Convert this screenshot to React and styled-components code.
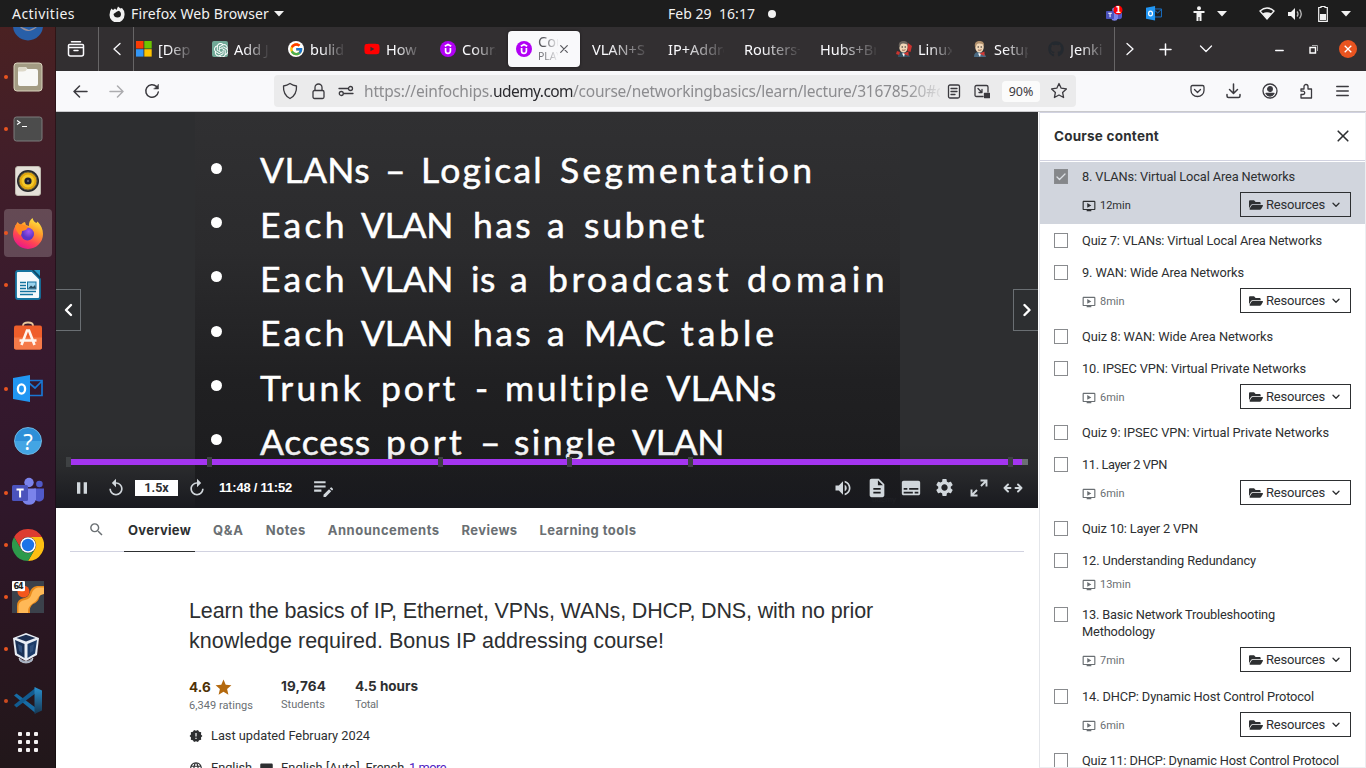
import React, { useLayoutEffect, useRef, useState } from 'react';
import styled, { createGlobalStyle, css } from 'styled-components';
import {
  MdReplay, MdSearch, MdSettings, MdVolumeUp, MdStar, MdOndemandVideo, MdEditNote,
  MdNewReleases, MdLanguage, MdDescription, MdSubtitles, MdPause,
} from 'react-icons/md';
import { FaFolderOpen, FaGithub, FaYoutube } from 'react-icons/fa';
import { FcGoogle } from 'react-icons/fc';
import { SiOpenai } from 'react-icons/si';

const GlobalStyle = createGlobalStyle`
  * { box-sizing: border-box; }
  html, body { margin: 0; height: 768px; overflow: hidden; }
  body { background: #fff; font-family: Roboto, "Liberation Sans", sans-serif; color: #2d2f31; }
  svg { display: block; flex: none; }
`;

const FitSpan = styled.span`
  display: inline-block;
  white-space: pre;
`;

/* Tracks a run of text out so that it fills the given width. */
function Fit({ width, children }) {
  const ref = useRef(null);
  const [spacing, setSpacing] = useState(0);
  useLayoutEffect(() => {
    const el = ref.current;
    el.style.letterSpacing = '0px';
    const natural = el.getBoundingClientRect().width;
    const next = (width - natural) / String(children).length;
    el.style.letterSpacing = `${next}px`;
    setSpacing(next);
  }, [width, children]);
  return <FitSpan ref={ref} style={{ letterSpacing: spacing }}>{children}</FitSpan>;
}

/* ---------- desktop shell ---------- */

const Desktop = styled.div`
  width: 1366px;
  height: 768px;
  display: grid;
  grid-template-rows: 27px 741px;
  overflow: hidden;
`;

const SystemBar = styled.header`
  background: #1d1d1d;
  color: #f2f2f2;
  display: grid;
  grid-template-columns: 500px 1fr 500px;
  align-items: center;
  font: 14px/27px "Noto Sans", sans-serif;
`;

const BarGroup = styled.div`
  display: flex;
  align-items: center;
  height: 27px;
  padding-left: ${(p) => p.$left || 0}px;
`;

const Space = styled.span`
  flex: none;
  width: ${(p) => p.$w}px;
`;

const NotifyDot = styled.span`
  width: 8px;
  height: 8px;
  border-radius: 50%;
  background: #f2f2f2;
`;

const Work = styled.div`
  display: grid;
  grid-template-columns: 56px 1310px;
  min-height: 0;
`;

const Dock = styled.nav`
  background: linear-gradient(#4a2122 0, #411e29 18%, #36192e 45%, #2f172a 65%, #28161f 85%, #21171a 100%);
  border-right: 1px solid rgba(0, 0, 0, 0.35);
  overflow: hidden;
  height: 741px;
`;

const DockList = styled.div`
  margin-top: -28px;
  display: flex;
  flex-direction: column;
`;

const DockItem = styled.div`
  height: 52px;
  display: grid;
  grid-template-columns: 4px 48px;
  align-items: center;
`;

const DockTile = styled.div`
  position: relative;
  width: 48px;
  height: 48px;
  display: grid;
  place-items: center;
  border-radius: 4px;
  background: ${(p) => (p.$active ? 'rgba(255,255,255,0.2)' : 'transparent')};
  opacity: ${(p) => (p.$dim ? 0.85 : 1)};
`;

const RunningDot = styled.i`
  position: absolute;
  left: 0;
  top: 22px;
  width: 4px;
  height: 4px;
  border-radius: 50%;
  background: #e95420;
`;

const AppGrid = styled.div`
  display: grid;
  grid-template-columns: repeat(3, 4px);
  gap: 4px;
  margin: 5px 0 0 18px;
  i { width: 4px; height: 4px; border-radius: 1px; background: #f4f1f2; }
`;

/* ---------- browser ---------- */

const Browser = styled.main`
  display: grid;
  grid-template-rows: 44px 41px 656px;
  min-width: 0;
`;

const TabStrip = styled.div`
  background: #322f31;
  color: #fbfbfe;
  display: flex;
  height: 44px;
`;

const StripCell = styled.div`
  width: ${(p) => p.$w}px;
  height: 44px;
  display: grid;
  place-items: center;
  padding: 0 ${(p) => p.$padRight || 0}px 0 ${(p) => p.$padLeft || 0}px;
  border-right: ${(p) => (p.$rule ? '1px solid #676566' : 'none')};
`;

const TabScroller = styled.div`
  width: 980px;
  overflow: hidden;
`;

const TabTrack = styled.div`
  display: flex;
  margin-left: -8px;
`;

const Tab = styled.div`
  flex: none;
  width: 72px;
  height: 36px;
  margin: 4px 2px;
  padding-left: 8px;
  border-radius: 4px;
  display: flex;
  align-items: center;
  gap: 6px;
  font: 14.5px/18px "Noto Sans", sans-serif;
  ${(p) => p.$active && css`
    background: #f9f9fb;
    color: #5a5a5f;
    box-shadow: 0 0 3px rgba(0, 0, 0, 0.5);
  `}
`;

const TabIcon = styled.span`
  flex: none;
  width: 16px;
  height: 16px;
`;

const TabLabel = styled.div`
  width: ${(p) => p.$w}px;
  overflow: hidden;
  white-space: nowrap;
  mask-image: linear-gradient(to right, #000 30%, transparent 105%);
  small { display: block; font-size: 10.5px; line-height: 12px; color: #77777c; }
`;

const ActiveLabel = styled(TabLabel)`
  flex: none;
  margin-right: -4px;
  line-height: 14px;
  height: 30px;
  small { line-height: 15px; padding-top: 1px; }
`;

const Toolbar = styled.div`
  background: #f9f9fb;
  border-bottom: 1px solid #c9c9cc;
  height: 41px;
  display: flex;
  align-items: center;
  color: #3b3a3f;
`;

const ToolIcon = styled.span`
  flex: none;
  width: ${(p) => p.$w || 36}px;
  display: grid;
  place-items: center;
  opacity: ${(p) => (p.$off ? 0.4 : 1)};
`;

const AddressBar = styled.div`
  flex: none;
  width: 802px;
  height: 32px;
  margin-left: 104px;
  border-radius: 4px;
  background: #ebebec;
  display: flex;
  align-items: center;
  padding-left: 2px;
`;

const Url = styled.div`
  flex: none;
  width: 576px;
  margin-left: 4px;
  overflow: hidden;
  white-space: nowrap;
  color: #8c8c8f;
  font: 15.5px/24px "Noto Sans", sans-serif;
  mask-image: linear-gradient(to right, #000 94%, transparent 101%);
  b { font-weight: 400; color: #2a2a2e; }
`;

const ZoomBadge = styled.div`
  flex: none;
  width: 38px;
  height: 21px;
  margin: 0 2px 0 6px;
  border-radius: 4px;
  background: #fbfbfb;
  text-align: center;
  font: 12.5px/21px "Noto Sans", sans-serif;
`;

const Page = styled.div`
  display: grid;
  grid-template-columns: 982px 328px;
  height: 656px;
  overflow: hidden;
  background: #fff;
`;

/* ---------- video player ---------- */

const Player = styled.section`
  position: relative;
  height: 396px;
  background: #2d2e30;
  overflow: hidden;
`;

const Slide = styled.div`
  width: 705px;
  height: 396px;
  margin-left: 139px;
  padding-top: 31px;
  background: linear-gradient(#303032 0%, #2b2b2d 35%, #202022 68%, #1b1b1d 100%);
`;

const Bullet = styled.div`
  height: 54.35px;
  display: flex;
  align-items: center;
  padding-left: 16px;
  color: #fff;
  font: 35.5px/54px Lato, sans-serif;
  -webkit-text-stroke: 0.5px #fff;
  &::before {
    content: '';
    width: 11px;
    height: 11px;
    margin: 0 38px 4px 0;
    border-radius: 50%;
    background: #fff;
  }
`;

const NavArrow = styled.button`
  position: absolute;
  top: 177px;
  ${(p) => (p.$side === 'left' ? 'left: -1px;' : 'right: -1px;')}
  width: 26px;
  height: 42px;
  padding: 0;
  display: grid;
  place-items: center;
  background: #2d2f31;
  border: 1px solid #6a6f73;
`;

const PlayerOverlay = styled.div`
  position: absolute;
  left: 0;
  right: 0;
  bottom: 0;
  height: 80px;
  padding: 29px 10px 0 13px;
  background: linear-gradient(rgba(28, 29, 31, 0) 20%, rgba(26, 27, 31, 0.2) 50%, rgba(24, 25, 30, 0.95) 100%);
`;

const Track = styled.div`
  position: relative;
  height: 10px;
  padding: 2px 0;
  &::before {
    content: '';
    display: block;
    height: 6px;
    background: linear-gradient(to right, #a435f0 953px, #6a6f73 953px);
  }
`;

const Marker = styled.i`
  position: absolute;
  top: 0;
  width: 5px;
  height: 10px;
  background: #3e4143;
`;

const Controls = styled.div`
  display: flex;
  align-items: center;
  height: 41px;
  margin-left: -13px;
  color: #d1d7dc;
`;

const Rate = styled.span`
  width: 43px;
  height: 16px;
  background: #fff;
  color: #2d2f31;
  text-align: center;
  font: 700 12.5px/16px Roboto, sans-serif;
`;

const Time = styled.span`
  color: #fff;
  font: 700 13px/16px "Liberation Sans", sans-serif;
`;

const Watermark = styled.span`
  position: absolute;
  left: 816px;
  bottom: 2px;
  color: #3c3d40;
  font: 8px/12px "Liberation Sans", sans-serif;
`;

/* ---------- course details ---------- */

const DetailTabs = styled.div`
  height: 44px;
  margin: 0 14px;
  padding-left: 18px;
  border-bottom: 1px solid #d1d2e0;
  display: flex;
  align-items: flex-start;
  color: #6a6f73;
`;

const DetailTab = styled.div`
  height: 44px;
  padding: 0 4px;
  margin-right: 13.9px;
  font: 700 13px/44px Inter, sans-serif;
  ${(p) => p.$active && css`
    color: #2d2f31;
    border-bottom: 1px solid #2d2f31;
  `}
`;

const SearchTab = styled.div`
  width: 36px;
  height: 43px;
  display: flex;
  align-items: center;
`;

const Details = styled.div`
  padding: 44px 0 0 133px;
`;

const Headline = styled.h1`
  margin: 0;
  font: 400 21.5px/30px "Liberation Sans", sans-serif;
  > span { display: block; height: 30px; }
`;

const Stats = styled.div`
  display: flex;
  margin-top: 21px;
`;

const Stat = styled.div`
  width: ${(p) => p.$w}px;
  padding-top: ${(p) => p.$drop || 0}px;
  color: #6a6f73;
  font: 11px/17px Roboto, sans-serif;
`;

const StatValue = styled.div`
  display: flex;
  align-items: center;
  gap: 3px;
  height: 19px;
  color: ${(p) => p.$color || '#2d2f31'};
  font: 700 13.5px/19px Inter, sans-serif;
`;

const InfoLine = styled.div`
  display: flex;
  align-items: center;
  height: 20px;
  margin-top: ${(p) => p.$top}px;
  font: 12.8px/20px Roboto, sans-serif;
  a { color: #5022c3; }
`;

/* ---------- course content sidebar ---------- */

const Sidebar = styled.aside`
  margin-left: 1px;
  border-left: 1px solid #e4e6ea;
  border-right: 1px solid #eceef1;
  border-bottom: 1px solid #eceef1;
  height: 656px;
  overflow: hidden;
`;

const SidebarHead = styled.div`
  position: relative;
  height: 49px;
  border-top: 1px solid #d1d2e0;
  border-bottom: 1px solid #d1d2e0;
  box-shadow: 0 1px #fff;
  background: #fff;
  padding: 0 16px 1px 14px;
  display: flex;
  align-items: center;
  justify-content: space-between;
  font: 700 13.5px/20px Inter, sans-serif;
`;

const Lectures = styled.div`
  margin-top: -1px;
`;

const Lecture = styled.div`
  display: grid;
  grid-template-columns: 14px 1fr;
  column-gap: 14px;
  height: ${(p) => p.$h}px;
  padding: 8px 14px 0 14px;
  background: ${(p) => (p.$current ? '#d1d5dd' : '#fff')};
`;

const Check = styled.span`
  width: 14px;
  height: 15px;
  margin-top: 1px;
  display: grid;
  place-items: center;
  border: 1px solid #898b8e;
  background: ${(p) => (p.$on ? '#85878a' : '#fff')};
`;

const LectureTitle = styled.div`
  font: 12.8px/17px Roboto, sans-serif;
  > span { display: block; height: 17px; }
`;

const Meta = styled.div`
  display: flex;
  justify-content: space-between;
  align-items: center;
  height: 25px;
  margin-top: ${(p) => (p.$tight ? 2 : 7)}px;
`;

const Duration = styled.span`
  display: flex;
  align-items: center;
  gap: 4px;
  padding-top: 2px;
  color: ${(p) => (p.$current ? '#2d2f31' : '#6a6f73')};
  font: 11px/16px Roboto, sans-serif;
`;

const ResourceButton = styled.button`
  width: 111px;
  height: 25px;
  padding: 0 0 0 8px;
  display: flex;
  align-items: center;
  background: transparent;
  border: 1px solid #2d2f31;
  color: #2d2f31;
  font: 13px/20px Roboto, sans-serif;
`;

/* ---------- drawings ---------- */

const Line = ({ w = 16, h = w, box = `0 0 ${w} ${h}`, sw = 1.3, children, color = 'currentColor' }) => (
  <svg width={w} height={h} viewBox={box} fill="none" stroke={color} strokeWidth={sw} strokeLinecap="round" strokeLinejoin="round">
    {children}
  </svg>
);

const Caret = () => <svg width="10" height="6"><path d="M0 0h10L5 5.5z" fill="#f2f2f2" /></svg>;

const UdemyIcon = () => (
  <svg width="16" height="16">
    <circle cx="8" cy="8" r="8" fill="#b200f5" />
    <path d="M4.8 5.2 8 3.4l3.2 1.8M5.6 7v3c0 3.2 4.8 3.2 4.8 0V7" fill="none" stroke="#fff" strokeWidth="1.7" />
  </svg>
);

const MicrosoftIcon = () => (
  <svg width="16" height="16">
    <path d="M0 0h7.5v7.5H0z" fill="#fa3c05" /><path d="M8.3 0h7.4v7.5H8.3z" fill="#6cc400" />
    <path d="M0 8.2h7.5v7.4H0z" fill="#3496f5" /><path d="M8.3 8.2h7.4v7.4H8.3z" fill="#ffc400" />
  </svg>
);

const ChatIcon = () => (
  <svg width="16" height="16">
    <rect width="16" height="16" rx="2" fill="#6fa896" />
    <SiOpenai x="2" y="2" width="12" height="12" color="#fff" />
  </svg>
);

const GoogleIcon = () => (
  <svg width="16" height="16"><circle cx="8" cy="8" r="8" fill="#fff" /><FcGoogle x="1" y="1" width="14" height="14" /></svg>
);

const JenkinsIcon = ({ tie }) => (
  <svg width="16" height="16">
    <path d="M2 16c0-4 2-5 5-5s6 1 7 5z" fill={tie ? '#335061' : '#4a6a83'} />
    <ellipse cx="7.5" cy="6" rx="4.3" ry="5.6" fill="#f0d6b7" />
    <path d="M3.3 7C1.5 1 5 0 7.500 0s5 1 4.600 5C10.500 2 6 2 4.700 3.600z" fill={tie ? '#6b645c' : '#b0906c'} />
    <path d="M6 12.500l2 3.500 1-4z" fill="#fff" />
    <path d="M7.500 12.500l5-2v4.500z" fill="#d33833" />
    {tie && <path d="M12 2l4 3-1.500 6-3-1z" fill="#c8332f" />}
    {tie && <path d="M1 10l3 1-1 3-3-1z" fill="#c8332f" />}
    <circle cx="6.200" cy="6" r=".7" fill="#222" /><circle cx="9.200" cy="6" r=".7" fill="#222" />
    <path d="M6 9q2 .8 3.500-.3" stroke="#7d4d35" strokeWidth=".8" fill="none" />
  </svg>
);

const TeamsIcon = ({ size = 32 }) => (
  <svg width={size} height={size} viewBox="0 0 32 32">
    <circle cx="27.400" cy="7" r="3.300" fill="#5059c9" /><circle cx="17" cy="5.500" r="4.700" fill="#7b83eb" />
    <path d="M22 11.500h10v8a5 5 0 0 1-9 3z" fill="#5059c9" />
    <path d="M10 11.500h14v11a7.300 7.300 0 0 1-14 0z" fill="#7b83eb" />
    <rect x="0" y="8" width="16" height="16" rx="1.500" fill="#4b53bc" />
    <path d="M4.500 12.500h7.200M8.100 12.500v8" stroke="#fff" strokeWidth="2" />
  </svg>
);

const OutlookIcon = ({ w = 30, h = 28 }) => (
  <svg width={w} height={h} viewBox="0 0 30 28">
    <path d="M16 5.500h13v15H16M16 8l6 5 6.500-6.500" fill="none" stroke="#1976d2" strokeWidth="1.700" />
    <path d="M0 3 17 0v27L0 24z" fill="#2196f3" />
    <ellipse cx="8.500" cy="14" rx="3.600" ry="4.600" fill="none" stroke="#fff" strokeWidth="2.300" />
  </svg>
);

const FilesIcon = () => (
  <svg width="30" height="30">
    <rect x="1" y="1" width="28" height="28" rx="3" fill="#a39b83" stroke="#d9d3bd" />
    <path d="M5 7q0-2 2-2h5q1.500 0 2.500 2H23q2 0 2 2v13q0 2-2 2H7q-2 0-2-2z" fill="#f8f8f6" />
    <path d="M5 8q0-3 2-3h5q1.500 0 2 2-1 2.500-4 2.500H5z" fill="#ddd8c8" />
  </svg>
);

const TerminalIcon = () => (
  <svg width="30" height="26">
    <rect x="1" y="1" width="28" height="24" rx="2.500" fill="#4c4c4c" stroke="#7d7d7d" />
    <path d="M4 4.500l3 2-3 2M9 10.500h5" fill="none" stroke="#fff" strokeWidth="1.200" />
  </svg>
);

const RhythmboxIcon = () => (
  <svg width="26" height="30">
    <rect x=".5" y=".5" width="25" height="29" rx="2.500" fill="#e4e0d8" stroke="#bcb7ad" />
    <circle cx="13" cy="15" r="11" fill="#25272c" /><circle cx="13" cy="15" r="9" fill="#e0a60f" stroke="#6b633f" />
    <circle cx="13" cy="15" r="6.500" fill="#f4c929" />
    <circle cx="13" cy="15" r="3.600" fill="#1c2030" /><circle cx="13" cy="15" r="1.200" fill="#5a6070" />
  </svg>
);

const FirefoxIcon = () => (
  <svg width="32" height="32">
    <defs>
      <linearGradient id="ff" x1="0.800" y1="0" x2="0.300" y2="1">
        <stop offset="0" stopColor="#fff044" /><stop offset=".35" stopColor="#ffa32b" />
        <stop offset=".7" stopColor="#ff4355" /><stop offset="1" stopColor="#e8138f" />
      </linearGradient>
      <radialGradient id="fp" cx=".6" cy=".3"><stop offset="0" stopColor="#a455f0" /><stop offset="1" stopColor="#5b35c4" /></radialGradient>
    </defs>
    <path d="M5.500 5Q7 7 9 7.500q2-2.500 4-2.500l1 3 3 1Q16.500 4 20.500 1q1 4 4 5l1-1.500C29 8 31 12 31 17a15 15 0 0 1-30 0q0-5 4.500-12z" fill="url(#ff)" />
    <circle cx="15.500" cy="17" r="6.500" fill="url(#fp)" />
    <path d="M3 8.500q7-2.500 13 1.500-1 3.500-6 4 0 3-1.500 4.500Q4 15 3 8.500z" fill="#ff8a22" />
  </svg>
);

const WriterIcon = () => (
  <svg width="26" height="30">
    <path d="M3 1h14l8 8v18q0 2-2 2H3q-2 0-2-2V3q0-2 2-2z" fill="#f6fafc" stroke="#14739f" strokeWidth="1.800" />
    <path d="M17 0h8v9z" fill="#0b4968" /><path d="M19 0h6v6z" fill="#2a9ac6" />
    <path d="M5 12.500h6M5 15.500h6M5 18.500h6M5 21.500h16M5 24.500h13" stroke="#14739f" strokeWidth="1.300" />
    <rect x="12.500" y="12" width="8.500" height="7" fill="#9bd3ec" stroke="#14739f" />
    <path d="M13 18.500l3-3 2 1.500 2-2 1 3.500z" fill="#274b5e" />
  </svg>
);

const SoftwareIcon = () => (
  <svg width="30" height="32">
    <path d="M10 7V4.500Q10 1.500 15 1.500t5 3V7" fill="none" stroke="#e9c79a" strokeWidth="1.800" />
    <rect x="1" y="4.500" width="28" height="24" rx="2" fill="#ef5e2b" /><path d="M1 16.500h28v10q0 2-2 2H3q-2 0-2-2z" fill="#f57a49" />
    <path d="M8.500 24 14 9.500h2L21.500 24M6.500 19.500h17" fill="none" stroke="#fff5ee" strokeWidth="2.600" />
  </svg>
);

const HelpGlyph = styled.span`
  width: 28px;
  height: 28px;
  border-radius: 50%;
  border: 1px solid #6bb7e4;
  background: linear-gradient(#2d8fd8 50%, #43a5e4 50%);
  color: #fff;
  text-align: center;
  font: 22px/26px "Noto Sans", sans-serif;
`;

const ChromeIcon = () => (
  <svg width="32" height="32" viewBox="-16 -16 32 32">
    <path d="M-13.860 -8A16 16 0 0 1 13.860 -8L0-8A8 8 0 0 0-7 4z" fill="#dd3c31" />
    <path d="M13.860-8A16 16 0 0 1 0 16L7 4A8 8 0 0 0 0-8z" fill="#fdbf12" />
    <path d="M0 16A16 16 0 0 1-13.860-8L-7 4A8 8 0 0 0 7 4z" fill="#2d9a4b" />
    <circle r="7.800" fill="#fff" /><circle r="6.200" fill="#1a73e8" />
  </svg>
);

const UltraIcon = () => (
  <svg width="32" height="32">
    <path d="M0 0h32v32H0z" fill="#3b414b" />
    <path d="M32 5h-7q-6 1-7.500 7-1 4-5.500 5-7 1-7 8v7h13q-1-6 3-9 5-2 6-6t5-4z" fill="#e98a1c" />
    <path d="M32 6.500h-6q-5 1-6.500 6.500-1 5-6.500 6-6.500 1-6.500 6.500V32H16q-.5-6 4-9 4.500-2.500 6-6t6-4z" fill="#ffb957" />
    <circle cx="11.500" cy="10.500" r="6" fill="#f4561b" /><circle cx="10" cy="8" r="3" fill="#ff8a46" />
    <rect x="0" y="0" width="13" height="10" rx="1" fill="#fff" />
    <text x="1.500" y="8" fontSize="8" fontWeight="700" fill="#222" fontFamily="DejaVu Sans, sans-serif" textLength="10">64</text>
  </svg>
);

const BoxIcon = () => (
  <svg width="32" height="32">
    <g transform="translate(0 -1)">
      <path d="M7 26q7 7 14 0l-1 3q-6 4-12 0z" fill="#8b9cb5" stroke="#dfe6ee" strokeWidth=".7" />
      <path d="M1 6 14 1 27 6l-2 17-11 6L3 23z" fill="#e9eef5" />
      <path d="M4.500 6 14 2.700 23.500 6 14 9.500z" fill="#1c2f52" /><path d="M3 8l9.500 4v14L5 21.500z" fill="#1a3156" />
      <path d="M25 8l-9.500 4v14l7.500-4.500z" fill="#1d3c69" /><path d="M6 12l4 2v7l-3-2zM22 12l-4 2v7l3-2z" fill="#31507d" />
    </g>
  </svg>
);

const CodeIcon = () => (
  <svg width="30" height="30">
    <defs><linearGradient id="vs" x2="0" y2="1"><stop offset="0" stopColor="#2aa6ee" /><stop offset="1" stopColor="#153d5c" /></linearGradient></defs>
    <path d="M1 9.500 3.500 7.500 23 22v5.500z" fill="#157bbd" /><path d="M1 19 3.500 21.500 23 7V1.500z" fill="#0f68a5" />
    <path d="M21.500 1 29 4.500v20L21.500 28z" fill="url(#vs)" />
  </svg>
);

const ThunderIcon = () => (
  <svg width="32" height="32"><circle cx="16" cy="16.500" r="15" fill="#285fa8" /><path d="M7 17q9 10 19 0l-9 4z" fill="#9e9199" /></svg>
);

const FoxMono = () => (
  <svg width="16" height="16"><path d="M2.500 2.500 4 4l2-1.500L7.500 4 9 .5l2.500 2L13 2q3 3 2.500 7a7.400 7.400 0 0 1-15 0Q.5 5 2.500 2.500zM8 5.500 4.500 8Q5 11.500 8.500 11.500T12 8q0-2-2-3.200z" fillRule="evenodd" fill="#f2f2f2" /></svg>
);

const ExpandArrows = () => (
  <svg width="18" height="18" fill="none" stroke="currentColor" strokeWidth="1.900">
    <path d="M11 7 16 2M10.500 1.500H16.500V7.500M7 11 2 16M1.500 10.500V16.500H7.500" />
  </svg>
);

/* ---------- data ---------- */

const dockApps = [
  { icon: <ThunderIcon /> }, { icon: <FilesIcon />, run: true }, { icon: <TerminalIcon />, run: true },
  { icon: <RhythmboxIcon /> }, { icon: <FirefoxIcon />, run: true, active: true }, { icon: <WriterIcon />, run: true },
  { icon: <SoftwareIcon /> }, { icon: <OutlookIcon />, run: true }, { icon: <HelpGlyph>?</HelpGlyph> },
  { icon: <TeamsIcon />, run: true }, { icon: <ChromeIcon />, run: true }, { icon: <UltraIcon />, run: true },
  { icon: <BoxIcon />, run: true }, { icon: <CodeIcon />, run: true, dim: true },
];

const browserTabs = [
  { icon: <MicrosoftIcon />, text: '[Dep' }, { icon: <ChatIcon />, text: 'Add J' }, { icon: <GoogleIcon />, text: 'bulid' },
  { icon: <FaYoutube size={16} color="#f00" />, text: 'How' }, { icon: <UdemyIcon />, text: 'Cours' },
  { icon: <UdemyIcon />, text: 'Cou', sub: 'PLAY', active: true },
  { text: 'VLAN+S' }, { text: 'IP+Addre' }, { text: 'Routers+' }, { text: 'Hubs+Bri' },
  { icon: <JenkinsIcon tie />, text: 'Linux' }, { icon: <JenkinsIcon />, text: 'Setup' },
  { icon: <FaGithub size={16} color="#24292f" />, text: 'Jenki' },
];

/* Each slide line alternates words and the gaps between them, with their widths. */
const slideLines = [
  [['VLANs', 110], [' ', 15], ['–', 18], [' ', 18], ['Logical', 123], [' ', 16], ['Segmentation', 256]],
  [['Each', 88], [' ', 13], ['VLAN', 92], [' ', 20], ['has', 60], [' ', 14], ['a', 22], [' ', 15], ['subnet', 123]],
  [['Each', 88], [' ', 13], ['VLAN', 92], [' ', 18], ['is', 25], [' ', 14], ['a', 22], [' ', 16], ['broadcast', 184], [' ', 15], ['domain', 142]],
  [['Each', 88], [' ', 13], ['VLAN', 92], [' ', 20], ['has', 60], [' ', 14], ['a', 22], [' ', 15], ['MAC', 82], [' ', 15], ['table', 97]],
  [['Trunk', 104], [' ', 17], ['port', 77], [' ', 17], ['-', 13], [' ', 17], ['multiple', 147], [' ', 15], ['VLANs', 110]],
  [['Access', 111], [' ', 15], ['port', 79], [' ', 15], ['–', 18], [' ', 16], ['single', 104], [' ', 14], ['VLAN', 92]],
];

const lectures = [
  { lines: [['8. VLANs: Virtual Local Area Networks', 213]], min: '12min', res: true, h: 64, current: true },
  { lines: [['Quiz 7: VLANs: Virtual Local Area Networks', 240]], h: 32 },
  { lines: [['9. WAN: Wide Area Networks', 162]], min: '8min', res: true, h: 64 },
  { lines: [['Quiz 8: WAN: Wide Area Networks', 191]], h: 32 },
  { lines: [['10. IPSEC VPN: Virtual Private Networks', 224]], min: '6min', res: true, h: 64 },
  { lines: [['Quiz 9: IPSEC VPN: Virtual Private Networks', 247]], h: 32 },
  { lines: [['11. Layer 2 VPN', 85]], min: '6min', res: true, h: 64 },
  { lines: [['Quiz 10: Layer 2 VPN', 116]], h: 32 },
  { lines: [['12. Understanding Redundancy', 174]], min: '13min', h: 54 },
  { lines: [['13. Basic Network Troubleshooting', 193], ['Methodology', 73]], min: '7min', res: true, h: 82 },
  { lines: [['14. DHCP: Dynamic Host Control Protocol', 232]], min: '6min', res: true, h: 64 },
  { lines: [['Quiz 11: DHCP: Dynamic Host Control Protocol', 257]], h: 32 },
];

/* ---------- sections ---------- */

const TopPanel = () => (
  <SystemBar>
    <BarGroup $left={12}>
      <Fit width={63}>Activities</Fit><Space $w={34} /><FoxMono /><Space $w={6} />
      <Fit width={138}>Firefox Web Browser</Fit><Space $w={5} /><Caret />
    </BarGroup>
    <BarGroup $left={168}><Fit width={87}>Feb 29  16:17</Fit><Space $w={13} /><NotifyDot /></BarGroup>
    <BarGroup $left={240}>
      <svg width="18" height="18">
        <g transform="translate(0 2)"><TeamsIcon size={16} /></g>
        <circle cx="12" cy="5" r="4.500" fill="#f00" /><text x="9.500" y="8" fontSize="8" fontWeight="700" fill="#fff" fontFamily="DejaVu Sans, sans-serif">1</text>
      </svg>
      <Space $w={22} /><OutlookIcon w={16} h={15} /><Space $w={30} />
      <svg width="14" height="16" stroke="#f2f2f2" strokeWidth="2" fill="none"><circle cx="7" cy="2.200" r="1.200" fill="#f2f2f2" strokeWidth="1.600" /><path d="M1.500 6h11M7 6v5M5.500 6v9M8.500 6v9" /></svg>
      <Space $w={11} /><Caret /><Space $w={32} />
      <svg width="16" height="14"><path d="M1 4Q8-2 15 4L8 12z" fill="none" stroke="#f2f2f2" strokeWidth="1.300" /><path d="M3.500 6.500Q8 4 12.500 6.500L8 12z" fill="#f2f2f2" /></svg>
      <Space $w={12} />
      <svg width="16" height="14"><path d="M1 5h3l4-4v12L4 9H1z" fill="#f2f2f2" /><path d="M10 4.500q2 2.500 0 5M12.500 2.500q3.500 4.500 0 9" stroke="#bbb" fill="none" strokeWidth="1.300" /></svg>
      <Space $w={15} />
      <svg width="10" height="16"><path d="M3 1.500V.5h4v1h2.300v13.800H.7V1.500z" fill="none" stroke="#f2f2f2" strokeWidth="1.200" /><path d="M2 8h6v6H2z" fill="#f2f2f2" /></svg>
      <Space $w={13} /><Caret />
    </BarGroup>
  </SystemBar>
);

const Tabs = () => (
  <TabStrip>
    <StripCell $w={43} $rule $padRight={2}>
      <Line w={18} h={18} sw={1.500}><path d="M4.500 1.700h9M2.500 4.500h13q1 0 1 1V14q0 2-2 2h-11q-2 0-2-2V5.500q0-1 1-1zM2.500 7.500h13M7 10.500h4" /></Line>
    </StripCell>
    <StripCell $w={35} $rule $padLeft={2}><Line w={10} h={14}><path d="M8 1.500 2 7l6 5.500" /></Line></StripCell>
    <TabScroller>
      <TabTrack>
        {browserTabs.map((t, i) => (
          <Tab key={i} $active={t.active}>
            {t.icon && <TabIcon>{t.icon}</TabIcon>}
            {t.active
              ? <><ActiveLabel $w={20}>{t.text}<small>{t.sub}</small></ActiveLabel><Line w={8} sw={1.200}><path d="M.7.7l6.600 6.600M7.300.7.7 7.300" /></Line></>
              : <TabLabel $w={t.icon ? 34 : 56}>{t.text}</TabLabel>}
          </Tab>
        ))}
      </TabTrack>
    </TabScroller>
    <StripCell $w={1} $rule />
    <StripCell $w={29}><Line w={10} h={14}><path d="M2 1.500 8 7l-6 5.500" /></Line></StripCell>
    <StripCell $w={42}><Line w={13} sw={1.500}><path d="M6.500 1v11M1 6.500h11" /></Line></StripCell>
    <StripCell $w={40}><Line w={14} h={8}><path d="M1.500 1 7 6.500 12.500 1" /></Line></StripCell>
    <Space $w={37} />
    <StripCell $w={33}><Line w={9} h={6} sw={1.400}><path d="M.7 4.500h7.500" /></Line></StripCell>
    <StripCell $w={34}><svg width="9" height="9"><path d="M1 2.500h5.500V8H1z" fill="none" stroke="#fff" strokeWidth="1.400" /><path d="M3 .5h5.500V6" fill="none" stroke="#a9a8a9" /></svg></StripCell>
    <StripCell $w={35}><svg width="18" height="18"><circle cx="9" cy="9" r="9" fill="#e95420" /><path d="M5.700 5.700l6.600 6.600M12.300 5.700l-6.600 6.600" stroke="#fff" strokeWidth="1.300" /></svg></StripCell>
  </TabStrip>
);

const Navigation = () => (
  <Toolbar>
    <Space $w={6} />
    <ToolIcon><Line w={15} h={13} sw={1.500}><path d="M14 6.500H1M6.500 1 1 6.500 6.500 12" /></Line></ToolIcon>
    <ToolIcon $off><Line w={15} h={13} sw={1.500}><path d="M1 6.500h13M8.500 1 14 6.500 8.500 12" /></Line></ToolIcon>
    <ToolIcon><Line w={16} sw={1.500}><path d="M14.300 9A6.300 6.300 0 1 1 12.500 3.500" /><path d="M14.500 1.500V6H10z" fill="currentColor" strokeWidth="0.500" /></Line></ToolIcon>
    <AddressBar>
      <ToolIcon $w={28}><Line w={16} h={18}><path d="M8 1.500Q11 3.500 14.500 4q.5 9-6.500 12.500Q1 13 1.500 4 5 3.500 8 1.500z" /></Line></ToolIcon>
      <ToolIcon $w={28}><Line w={13} h={17}><rect x="1" y="7.500" width="11" height="8" rx="1.500" /><path d="M3 7V4.500a3.500 3.500 0 0 1 7 0V7" /></Line></ToolIcon>
      <ToolIcon $w={28}><Line w={16} h={12}><path d="M1 3.500h9M6 8.500h9" /><circle cx="12.500" cy="3.500" r="2" /><circle cx="3.300" cy="8.500" r="2" /></Line></ToolIcon>
      <Url><Fit width={129}>https://einfochips.</Fit><b><Fit width={80}>udemy.com</Fit></b><Fit width={363}>/course/networkingbasics/learn/lecture/31678520#</Fit>o</Url>
      <ToolIcon $w={28}><Line w={14} h={15}><rect x="1.500" y="1" width="11" height="13" rx="1.500" /><path d="M4 4.500h6M4 7.500h6M4 10.500h4" /></Line></ToolIcon>
      <ToolIcon $w={28}><Line w={16} h={15}><path d="M9 12.500H2.500Q1 12.500 1 11V3q0-1.500 1.500-1.500h10Q14 1.500 14 3v5M4 4.500l4 4M8 5.500v3H5" /><rect x="10.500" y="9.500" width="5" height="4" fill="currentColor" /></Line></ToolIcon>
      <ZoomBadge>90%</ZoomBadge>
      <ToolIcon $w={34}><Line w={18}><path d="M9 1.500l2.200 4.700 5.200.7-3.800 3.500 1 5.100L9 13l-4.600 2.500 1-5.100L1.600 6.900l5.200-.7z" /></Line></ToolIcon>
    </AddressBar>
    <Space $w={103} />
    <ToolIcon><Line w={15} h={14}><path d="M2.500 1.500h10q1.500 0 1.500 1.500v3.500a6.500 6 0 0 1-13 0V3q0-1.500 1.500-1.500zM4.500 5.500l3 3 3-3" /></Line></ToolIcon>
    <ToolIcon><Line w={15} h={16} sw={1.500}><path d="M7.500 1v9M3.500 6.500l4 4 4-4M1 11.500V13q0 1.500 1.500 1.500h10Q14 14.500 14 13v-1.500" /></Line></ToolIcon>
    <ToolIcon $w={37}><Line w={16}><circle cx="8" cy="8" r="7" /><circle cx="8" cy="6" r="2.300" fill="currentColor" /><path d="M4 10.500h8Q10.500 13 8 13t-4-2.500z" fill="currentColor" /></Line></ToolIcon>
    <ToolIcon><Line w={15} h={16}><path d="M2 6h3V3.500a2 2 0 0 1 4 0V6h3.500v9H2v-3.500h2a1.700 1.700 0 0 0 0-3.400H2z" /></Line></ToolIcon>
    <ToolIcon><Line w={13} h={12}><path d="M.7 1.500h11.600M.7 6h11.600M.7 10.500h11.600" /></Line></ToolIcon>
  </Toolbar>
);

const Video = () => (
  <Player>
    <Slide>
      {slideLines.map((words, i) => (
        <Bullet key={i}>{words.map(([text, w], j) => <Fit key={j} width={w}>{text}</Fit>)}</Bullet>
      ))}
    </Slide>
    <NavArrow $side="left"><Line w={9} h={14} sw={2.400} color="#fff"><path d="M7 2 2 7l5 5" /></Line></NavArrow>
    <NavArrow $side="right"><Line w={9} h={14} sw={2.400} color="#fff"><path d="M2.500 2l5 5-5 5" /></Line></NavArrow>
    <Watermark>udemy</Watermark>
    <PlayerOverlay>
      <Track>{[-3, 138, 369, 498, 619, 939].map((x) => <Marker key={x} style={{ left: x }} />)}</Track>
      <Controls>
        <Space $w={16} /><MdPause size={20} /><Space $w={14} />
        <MdReplay size={20} /><Space $w={9} /><Rate>1.5x</Rate><Space $w={9} />
        <MdReplay size={20} transform="scale(-1 1)" /><Space $w={12} />
        <Time><Fit width={73}>11:48 / 11:52</Fit></Time><Space $w={19} />
        <MdEditNote size={25} /><Space $w={497} />
        <MdVolumeUp size={20} /><Space $w={13} /><MdDescription size={22} /><Space $w={12} />
        <MdSubtitles size={22} /><Space $w={12} /><MdSettings size={21} /><Space $w={15} />
        <ExpandArrows /><Space $w={15} />
        <Line w={20} h={10} sw={1.900}><path d="M7.500 5H1.500M5 1.500 1.500 5 5 8.500M12.500 5h6M15 1.500 18.500 5 15 8.500" /></Line>
      </Controls>
    </PlayerOverlay>
  </Player>
);

const Course = () => (
  <>
    <DetailTabs>
      <SearchTab><MdSearch size={17} /></SearchTab>
      <DetailTab $active><Fit width={63}>Overview</Fit></DetailTab>
      <DetailTab><Fit width={31}>Q&amp;A</Fit></DetailTab>
      <DetailTab><Fit width={40}>Notes</Fit></DetailTab>
      <DetailTab><Fit width={112}>Announcements</Fit></DetailTab>
      <DetailTab><Fit width={56}>Reviews</Fit></DetailTab>
      <DetailTab><Fit width={97}>Learning tools</Fit></DetailTab>
    </DetailTabs>
    <Details>
      <Headline>
        <span><Fit width={684}>Learn the basics of IP, Ethernet, VPNs, WANs, DHCP, DNS, with no prior</Fit></span>
        <span><Fit width={475}>knowledge required. Bonus IP addressing course!</Fit></span>
      </Headline>
      <Stats>
        <Stat $w={92} $drop={1}><StatValue $color="#4d3105"><Fit width={22}>4.6</Fit><MdStar size={19} color="#b4690e" /></StatValue><Fit width={64}>6,349 ratings</Fit></Stat>
        <Stat $w={74}><StatValue><Fit width={45}>19,764</Fit></StatValue><Fit width={44}>Students</Fit></Stat>
        <Stat $w={90}><StatValue><Fit width={63}>4.5 hours</Fit></StatValue><Fit width={23}>Total</Fit></Stat>
      </Stats>
      <InfoLine $top={12}><MdNewReleases size={14} /><Space $w={8} /><Fit width={159}>Last updated February 2024</Fit></InfoLine>
      <InfoLine $top={12}>
        <MdLanguage size={14} /><Space $w={8} /><Fit width={41}>English</Fit><Space $w={7} />
        <MdSubtitles size={15} /><Space $w={7} /><Fit width={126}>English [Auto], French,</Fit><Space $w={2} /><a><Fit width={37}>1 more</Fit></a>
      </InfoLine>
    </Details>
  </>
);

const Content = () => (
  <Sidebar>
    <SidebarHead><Fit width={105}>Course content</Fit><Line w={12} sw={1.600}><path d="M1.200 1.200l9.600 9.600M10.800 1.200l-9.600 9.600" /></Line></SidebarHead>
    <Lectures>
      {lectures.map((l) => (
        <Lecture key={l.lines[0][0]} $h={l.h} $current={l.current}>
          <Check $on={l.current}>{l.current && <Line w={10} h={8} color="#dcdfe4"><path d="M1 4l2.500 2.500L9 1" /></Line>}</Check>
          <div>
            <LectureTitle>{l.lines.map(([text, w]) => <span key={text}><Fit width={w}>{text}</Fit></span>)}</LectureTitle>
            {l.min && (
              <Meta $tight={!l.res}>
                <Duration $current={l.current}><MdOndemandVideo size={14} />{l.min}</Duration>
                {l.res && (
                  <ResourceButton>
                    <FaFolderOpen size={14} /><Space $w={3} /><Fit width={59}>Resources</Fit><Space $w={7} />
                    <Line w={8} h={6}><path d="M1 1.200l3 3 3-3" /></Line>
                  </ResourceButton>
                )}
              </Meta>
            )}
          </div>
        </Lecture>
      ))}
    </Lectures>
  </Sidebar>
);

export default function App() {
  return (
    <>
      <GlobalStyle />
      <Desktop>
        <TopPanel />
        <Work>
          <Dock>
            <DockList>
              {dockApps.map((a, i) => (
                <DockItem key={i}><span /><DockTile $active={a.active} $dim={a.dim}>{a.run && <RunningDot />}{a.icon}</DockTile></DockItem>
              ))}
            </DockList>
            <AppGrid>{Array.from({ length: 9 }, (_, i) => <i key={i} />)}</AppGrid>
          </Dock>
          <Browser>
            <Tabs />
            <Navigation />
            <Page>
              <div><Video /><Course /></div>
              <Content />
            </Page>
          </Browser>
        </Work>
      </Desktop>
    </>
  );
}
